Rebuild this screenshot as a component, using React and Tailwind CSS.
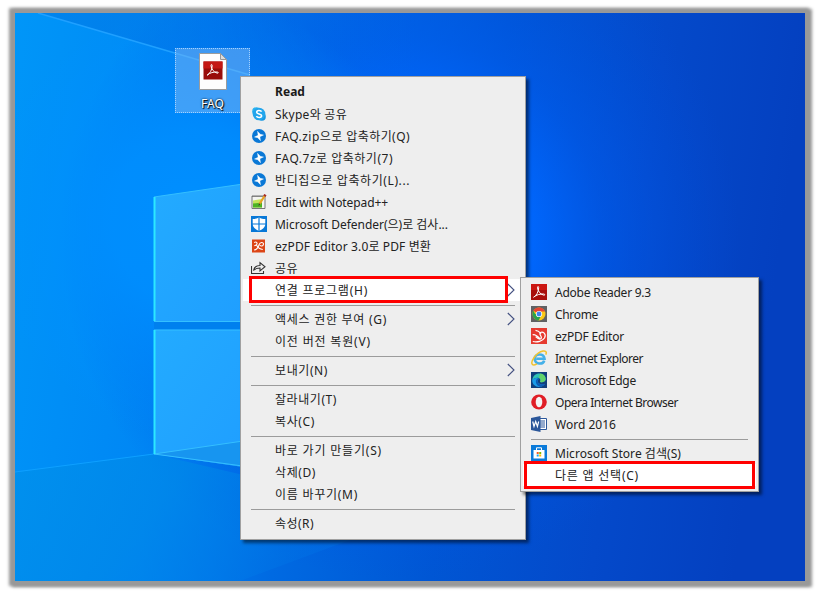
import { useLayoutEffect, useRef, useState } from 'react';

const MENU = [
  { label: 'Read', bold: true, width: 30 },
  { label: 'Skype와 공유', icon: 'skype', width: 72 },
  { label: 'FAQ.zip으로 압축하기(Q)', icon: 'bandizip', width: 135 },
  { label: 'FAQ.7z로 압축하기(7)', icon: 'bandizip', width: 118 },
  { label: '반디집으로 압축하기(L)...', icon: 'bandizip', width: 135 },
  { label: 'Edit with Notepad++', icon: 'notepad', width: 113 },
  { label: 'Microsoft Defender(으)로 검사...', icon: 'defender', width: 173 },
  { label: 'ezPDF Editor 3.0로 PDF 변환', icon: 'ezpdf', width: 156 },
  { label: '공유', icon: 'share', width: 23 },
  { label: '연결 프로그램(H)', submenu: true, active: true, width: 93 },
  { separator: true },
  { label: '액세스 권한 부여 (G)', submenu: true, width: 112 },
  { label: '이전 버전 복원(V)', width: 96 },
  { separator: true },
  { label: '보내기(N)', submenu: true, width: 53 },
  { separator: true },
  { label: '잘라내기(T)', width: 62 },
  { label: '복사(C)', width: 40 },
  { separator: true },
  { label: '바로 가기 만들기(S)', width: 107 },
  { label: '삭제(D)', width: 41 },
  { label: '이름 바꾸기(M)', width: 83 },
  { separator: true },
  { label: '속성(R)', width: 39 },
];

const OPEN_WITH = [
  { label: 'Adobe Reader 9.3', icon: 'adobe', width: 96 },
  { label: 'Chrome', icon: 'chrome', width: 43 },
  { label: 'ezPDF Editor', icon: 'ezpdfBig', width: 69 },
  { label: 'Internet Explorer', icon: 'ie', width: 88 },
  { label: 'Microsoft Edge', icon: 'edge', width: 81 },
  { label: 'Opera Internet Browser', icon: 'opera', width: 123 },
  { label: 'Word 2016', icon: 'word', width: 61 },
  { separator: true },
  { label: 'Microsoft Store 검색(S)', icon: 'store', width: 126 },
  { label: '다른 앱 선택(C)', active: true, width: 84 },
];

const ACROBAT = 'M2.6 13.2c2.800-1.500 5-5.300 5.100-9.600c0-1.600-1.500-1.500-1.200.2c.4 3.200 2.500 6.300 6 7.300c1.800.4 1.700-1 .2-1.100c-3.500-.2-7.300.7-10.100 3.200z';

const ICONS = {
  skype: (
    <>
      <circle cx="5.200" cy="5.200" r="4" fill="#2bb3f0" />
      <circle cx="10.800" cy="10.800" r="4" fill="#1596e0" />
      <circle cx="8" cy="8" r="6.300" fill="#22a5ec" />
      <path d="M10.600 5.700C9.800 4.200 5.700 4 5.700 6.200c0 2.300 4.900 1.200 4.900 3.600c0 2.200-4.200 2.200-5.200.3" fill="none" stroke="#fff" strokeWidth="1.600" />
    </>
  ),
  bandizip: (
    <>
      <circle cx="8" cy="8" r="7" fill="#0a78d6" />
      <path d="M6.500 3.300L9.300 6.300L12.500 7L8.900 8.700L9.500 12.700L6.700 9.700L3.500 9L7.100 7.300Z" fill="#fff" stroke="#fff" strokeWidth=".4" />
    </>
  ),
  notepad: (
    <>
      <path d="M1 2h13v12.500H1z" fill="#f5f5f2" stroke="#777" />
      <path d="M2 6.500l9-1.500v8.500H2z" fill="#c4e65a" />
      <path d="M2 9.500l9-1v5H2z" fill="#4db324" />
      <path d="M1.500 2.500h11" stroke="#555" strokeDasharray="1 1" />
      <path d="M13.500 2L8.500 10" stroke="#e8a321" strokeWidth="2.200" />
      <path d="M13.400 2.200l1-1.600" stroke="#a72a22" strokeWidth="2.600" />
      <path d="M8.700 9.600l-.8 1.800" stroke="#333" />
    </>
  ),
  defender: (
    <>
      <path d="M0 0h16v16H0z" fill="#0878d7" />
      <path d="M8 1.200C6 2.700 4 3 1.700 3V8c0 3.500 3 5.500 6.300 6.900c3.300-1.400 6.300-3.400 6.300-6.900V3C12 3 10 2.700 8 1.200z" fill="#fff" />
      <path d="M8 1v14M1 8h14" stroke="#0878d7" strokeWidth="1.200" />
    </>
  ),
  ezpdf: (
    <>
      <path d="M1 1.500h13v13H1z" fill="#dc4516" />
      <path d="M3.200 4.600c1.500-1.200 3.300-.2 2.700 1.500c-.4 1-1.600 1.500-2.600 1.500M5.600 7.200c1 1.800 2.600 3.800 6.200 4.300M3 12c3.200-.3 4.600-3.600 5.200-5.500c.8-2.500 4.200-2.700 4.300-.4c0 2.100-2.400 2.300-3.600 1.300" fill="none" stroke="#fff" strokeWidth="1.100" />
    </>
  ),
  ezpdfBig: (
    <>
      <path d="M0 0h16v16H0z" fill="#e63a30" />
      <path d="M4.500 2.300c1.800 0 3.800 1.200 5.600 3.300M1.700 7c1.800-1.600 4.200.8 7.200 3.600M1.800 13.500c4.700 1 9.700-.3 11.700-3.500c2.300-4-1.800-7-4-5.500c-2.500 2 2.700 4 .3 6.300c-1.500 1-3.500-.6-5.200-2.200" fill="none" stroke="#fff" strokeWidth="1.200" />
    </>
  ),
  share: (
    <path d="M.500 6v7.500h12V11M2.500 10.500c.8-3.500 3-5 6.500-5V2.600l5 4.200l-5 4.100V8C6 8 4 8.700 2.500 10.500z" fill="none" stroke="#333" strokeWidth="1.100" />
  ),
  adobe: (
    <>
      <path d="M0 0h16v16H0z" fill="#a80e0b" />
      <path d="M0 0h16v6H0z" fill="#cc1712" />
      <path d={ACROBAT} fill="none" stroke="#fff" />
    </>
  ),
  chrome: (
    <>
      <path d="M0 0h16v16H0z" fill="#606163" />
      <circle cx="8" cy="8" r="6.500" fill="#fbc916" />
      <path d="M8 8L2.370 4.750A6.500 6.500 0 0 1 13.630 4.750L14 5.500H8z" fill="#e64335" />
      <path d="M2.370 4.750A6.500 6.500 0 0 0 7.600 14.500L10 10L8 8H4.200z" fill="#2ba24c" />
      <circle cx="8" cy="8" r="3.100" fill="#fff" />
      <circle cx="8" cy="8" r="2.400" fill="#3e82ee" />
    </>
  ),
  ie: (
    <>
      <path d="M13.200 10.600C12 14.800 4.200 14.700 3.700 8.800C3.500 3.500 12.800 2.500 13.500 8.700H5.200" fill="none" stroke="#45b0e8" strokeWidth="2.600" />
      <path d="M1.600 14.700C-1.200 12.200 5 2.500 12 1.100c4-.6 3.500 2 2.700 3.500M1.600 14.700c1.200.8 3 0 4.300-.8" fill="none" stroke="#f2c22e" strokeWidth="1.500" />
    </>
  ),
  edge: (
    <>
      <path d="M0 0h16v16H0z" fill="#123f7c" />
      <path d="M1.200 8.500C1.500 3.500 5 1.300 8.500 1.400c4 .1 6.500 3 6.100 6.100c-.5 2.700-4 3.300-5.600 2.200c1-1.200.3-3.500-2-3.900c-2.500-.3-5 1-5.800 2.700z" fill="#31c3b5" />
      <path d="M9 1.400c4 .1 6 3.300 5.600 6.100c-.5 2.700-4 3.300-5.600 2.200c1.300-2 .6-3-1-4z" fill="#62d36a" />
      <path d="M1.200 8.500c0 4.500 4.500 7.500 9.200 6c1.800-.6 2.900-1.600 3.600-2.700c-3 1.400-7.200.3-7.400-2.600c0-1.200.8-2 1.400-2.500C5 5.300 2 6.200 1.200 8.500z" fill="#1b9be8" />
      <path d="M5 8.500c-.6 3 1.500 5.800 4.600 6.300c2.200-.3 3.600-1.500 4.400-3c-4 1.400-7.200 0-7.400-2.600c0-1.200.8-2 1.400-2.500c-1.500-.3-2.700.4-3 1.800z" fill="#0d5bb5" />
    </>
  ),
  opera: (
    <>
      <ellipse cx="8" cy="8" rx="7.800" ry="7.600" fill="#e01e26" />
      <ellipse cx="8" cy="8" rx="3.300" ry="5.300" fill="#f4f4f4" />
    </>
  ),
  word: (
    <>
      <path d="M8 2.500h7.500v11H8z" fill="#fff" stroke="#2b579a" />
      <path d="M9 5h5M9 7h5M9 9h5M9 11h5" stroke="#2b579a" />
      <path d="M0 2L9.500 0v16L0 14z" fill="#2b579a" />
      <path d="M1.700 5.500l1.300 5l1.700-5l1.700 5l1.300-5" fill="none" stroke="#fff" strokeWidth="1.200" />
    </>
  ),
  store: (
    <>
      <path d="M0 0h16v16H0z" fill="#0a7ad9" />
      <path d="M5.500 5V2.800h5V5" fill="none" stroke="#fff" />
      <path d="M2.500 5h11v8.500h-11z" fill="#fff" />
      <path d="M5.700 7h2v2h-2z" fill="#f05a28" />
      <path d="M8.200 7h2v2h-2z" fill="#7fba00" />
      <path d="M5.700 9.500h2v2h-2z" fill="#12a4ef" />
      <path d="M8.200 9.500h2v2h-2z" fill="#ffb900" />
    </>
  ),
};

function Icon({ name }) {
  return (
    <svg viewBox="0 0 16 16" className="block h-4 w-4">
      {ICONS[name]}
    </svg>
  );
}

// tightens or loosens the tracking until the label is `width` wide
function Label({ text, width, bold }) {
  const ref = useRef(null);
  const [tracking, setTracking] = useState(0);
  useLayoutEffect(() => {
    const natural = ref.current.getBoundingClientRect().width;
    setTracking((width - natural) / text.length);
  }, []);
  return (
    <span
      ref={ref}
      className={bold ? 'leading-[20px] font-bold whitespace-nowrap text-[#1b1b1b]' : 'pt-px leading-[20px] whitespace-nowrap text-[#222]'}
      style={{ letterSpacing: tracking }}
    >
      {text}
    </span>
  );
}

function MenuRow({ item }) {
  if (item.separator) {
    return (
      <div className="h-[7px] pt-1 pr-2 pl-2">
        <div className="h-px bg-[#9b9b9b]" />
      </div>
    );
  }
  return (
    <div className={item.active ? 'flex h-[22px] items-center bg-white' : 'flex h-[22px] items-center'}>
      <div className="w-8 shrink-0 pl-2">{item.icon && <Icon name={item.icon} />}</div>
      <Label text={item.label} width={item.width} bold={item.bold} />
      {item.submenu && (
        <svg viewBox="0 0 8 14" className="mr-2 ml-auto h-[14px] w-2">
          <path d="M.8 1L7 7L.8 13" fill="none" stroke="#435080" strokeWidth="1.100" />
        </svg>
      )}
    </div>
  );
}

function Menu({ items, className }) {
  return (
    <div className={'absolute border border-[#a0a0a0] bg-[#eee] shadow-[3px_3px_3px_rgba(0,0,0,0.5)] ' + className}>
      {items.map((item, i) => (
        <MenuRow key={i} item={item} />
      ))}
    </div>
  );
}

function Wallpaper() {
  return (
    <svg viewBox="15 13 790 568" className="block h-[568px] w-[790px]">
      <defs>
        <linearGradient id="sky" x1="0" x2="1" y1="0" y2="0.100">
          <stop offset="0" stopColor="#0096f8" />
          <stop offset="0.250" stopColor="#0086f4" />
          <stop offset="0.420" stopColor="#006ae2" />
          <stop offset="0.620" stopColor="#0056d4" />
          <stop offset="0.820" stopColor="#0449ca" />
          <stop offset="1" stopColor="#0440c0" />
        </linearGradient>
        <radialGradient id="glow" gradientUnits="userSpaceOnUse" cx="400" cy="240" r="340">
          <stop offset="0" stopColor="#0080ff" />
          <stop offset="0.380" stopColor="#0068ff" stopOpacity="0.950" />
          <stop offset="0.600" stopColor="#005cf0" stopOpacity="0.550" />
          <stop offset="1" stopColor="#0050e0" stopOpacity="0" />
        </radialGradient>
        <radialGradient id="shine" gradientUnits="userSpaceOnUse" cx="200" cy="220" r="220">
          <stop offset="0" stopColor="#0090ff" />
          <stop offset="0.400" stopColor="#0090ff" stopOpacity="0.850" />
          <stop offset="1" stopColor="#0090ff" stopOpacity="0" />
        </radialGradient>
        <linearGradient id="shade" gradientUnits="userSpaceOnUse" x1="38" x2="420" y1="0" y2="0">
          <stop offset="0" stopColor="#0068d8" stopOpacity="0.350" />
          <stop offset="0.500" stopColor="#0068e0" stopOpacity="0.350" />
          <stop offset="1" stopColor="#0068e0" stopOpacity="0" />
        </linearGradient>
        <linearGradient id="floor" x1="0" x2="1" y1="0" y2="0.300">
          <stop offset="0" stopColor="#0090e6" stopOpacity="0.500" />
          <stop offset="0.500" stopColor="#0088e8" stopOpacity="0.700" />
          <stop offset="1" stopColor="#0078e8" stopOpacity="0.300" />
        </linearGradient>
        <linearGradient id="pane" x1="0" x2="1" y1="0" y2="1">
          <stop offset="0" stopColor="#23abff" />
          <stop offset="1" stopColor="#1f9eff" />
        </linearGradient>
      </defs>
      <path d="M15 13h790v568H15z" fill="url(#sky)" />
      <path d="M15 13h790v568H15z" fill="url(#glow)" />
      <path d="M15 13h790v568H15z" fill="url(#shine)" />
      <path d="M38 13L250 75L420 125V13z" fill="url(#shade)" />
      <path d="M38 13L250 75" stroke="#1fa0ff" strokeWidth="1.500" />
      <path d="M15 472L154 454L350 500V540L240 581H15z" fill="url(#floor)" />
      <path d="M15 472L154 454" stroke="#0ea0ff" strokeWidth="1" />
      <path d="M154 197L250 183V322H154z" fill="url(#pane)" />
      <path d="M154 330H250V468L154 454z" fill="url(#pane)" />
      <path d="M154 454L250 440V468z" fill="#1795f0" />
      <path d="M154 322h96v7h-96z" fill="#0080ee" />
      <path d="M154 197L250 183M154 321.500H250M154 330H250M154 454L250 440M154 454L250 467" fill="none" stroke="#34bfff" />
      <path d="M154.500 197V321M154.500 330V454" stroke="#2ce8ff" strokeWidth="2" />
    </svg>
  );
}

export default function App() {
  return (
    <div className="relative h-[594px] w-[820px] overflow-hidden bg-white pt-[13px] pl-[15px] font-['Noto_Sans','Noto_Sans_CJK_KR',sans-serif] text-[12px]">
      <div className="h-[568px] w-[790px] shadow-[2px_1px_3px_5px_#999,-1px_0_3px_5px_#999]">
        <Wallpaper />
      </div>

      <div className="absolute top-[48px] left-[175px] flex h-[65px] w-[75px] flex-col items-center border border-dotted border-[#a4d2ff] bg-[#73b4f5]/55 pt-1">
        <svg viewBox="0 0 28 37" className="h-[37px] w-7">
          <path d="M.5.5h21l6 6v30H.5z" fill="#fdfdfd" stroke="#9b9b9b" />
          <path d="M21.500.5v6h6z" fill="#ddd" stroke="#999" />
          <path d="M4.500 8.500h19v18h-19z" fill="#990c0a" />
          <path d="M4.500 8.500h19v7h-19z" fill="#c41713" />
          <g transform="translate(5.500 9)">
            <path d={ACROBAT} fill="none" stroke="#fff" />
          </g>
        </svg>
        <div className="mt-[6px] leading-[16px] text-white [text-shadow:1px_1px_1px_#000,0_0_2px_#000]">FAQ</div>
      </div>

      <Menu items={MENU} className="top-[76px] left-[240px] h-[464px] w-[286px] px-[2px] pt-1" />
      <Menu items={OPEN_WITH} className="top-[277px] left-[520px] h-[215px] w-[239px] px-[2px] pt-[3px]" />

      <div className="absolute top-[276px] left-[249px] h-[27px] w-[259px] border-[3px] border-[#f00]" />
      <div className="absolute top-[461px] left-[524px] h-[28px] w-[231px] border-[3px] border-[#f00]" />
    </div>
  );
}
